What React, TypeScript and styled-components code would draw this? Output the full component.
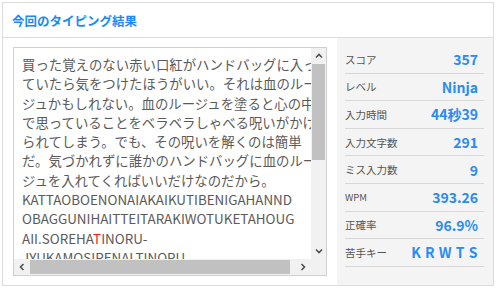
import React from 'react';
import styled, { createGlobalStyle } from 'styled-components';

const GlobalStyle = createGlobalStyle`
  html, body {
    margin: 0;
    padding: 0;
    background: #fff;
    overflow: hidden;
  }
  body {
    font-family: "Noto Sans CJK JP", "Noto Sans", sans-serif;
  }
`;

const Page = styled.div`
  padding: 2px 0 0 2px;
`;

const Card = styled.section`
  width: 490px;
  height: 282px;
  border: 1px solid #dcdcdc;
  background: #fff;
  display: flex;
  flex-direction: column;
  overflow: hidden;
`;

const Header = styled.h2`
  margin: 0;
  flex: 0 0 34px;
  display: flex;
  align-items: center;
  padding-left: 9px;
  border-bottom: 1px solid #dcdcdc;
  font-size: 12.5px;
  font-weight: 700;
  color: #1a8cf0;
`;

const Body = styled.div`
  flex: 1;
  min-height: 0;
  display: flex;
`;

const TextArea = styled.div`
  flex: 1;
  padding: 9px 10px;
`;

const TextBox = styled.div`
  height: 229px;
  box-sizing: border-box;
  border: 1px solid #cfcfcf;
  display: grid;
  grid-template-columns: 1fr 15px;
  grid-template-rows: 1fr 16px;
`;

const Viewport = styled.div`
  overflow: hidden;
  padding: 7px 0 0 8px;
  color: #5a5a5a;
  font-size: 13.4px;
  line-height: 19.3px;
`;

const TextInner = styled.div`
  width: 296px;
`;

const Line = styled.div`
  white-space: nowrap;
`;

const Rest = styled.div`
  word-break: break-all;
`;

const Typed = styled.span`
  color: #ff1a1a;
`;

const ScrollBar = styled.div<{ $vertical?: boolean }>`
  display: flex;
  flex-direction: ${({ $vertical }) => ($vertical ? 'column' : 'row')};
  background: #f1f1f1;
`;

const ArrowBtn = styled.div`
  flex: 0 0 16px;
  display: flex;
  align-items: center;
  justify-content: center;
  color: #505050;
`;

const Track = styled.div<{ $vertical?: boolean }>`
  flex: 1;
  display: flex;
  flex-direction: ${({ $vertical }) => ($vertical ? 'column' : 'row')};
`;

const Thumb = styled.div<{ $size: number; $vertical?: boolean }>`
  flex: 0 0 ${({ $size }) => $size}px;
  background: #c1c1c1;
  ${({ $vertical }) => ($vertical ? 'margin: 0 1px;' : 'margin: 1px 0;')}
`;

const Corner = styled.div`
  background: #f1f1f1;
`;

const Stats = styled.aside`
  width: 156px;
  box-sizing: border-box;
  background: #f4f4f4;
  padding: 8px 9px 0 8px;
`;

const StatRow = styled.div`
  display: flex;
  align-items: center;
  justify-content: space-between;
  height: 27.6px;
  box-sizing: border-box;
  border-bottom: 1px solid #d8d8d8;
  padding-right: 6px;
`;

const Label = styled.span<{ $latin?: boolean }>`
  font-size: ${({ $latin }) => ($latin ? '9.5px' : '10.5px')};
  color: #555;
`;

const Value = styled.span<{ $spaced?: boolean }>`
  font-size: 14px;
  font-weight: 700;
  color: #2a8cf0;
  letter-spacing: ${({ $spaced }) => ($spaced ? '0.5px' : '0')};
`;

const Chevron: React.FC<{ dir: 'up' | 'down' | 'left' | 'right' }> = ({ dir }) => {
  const rot = { up: 0, right: 90, down: 180, left: 270 }[dir];
  return (
    <svg width="8" height="8" viewBox="0 0 8 8" style={{ transform: `rotate(${rot}deg)` }}>
      <path d="M1 5.5 L4 2.5 L7 5.5" fill="none" stroke="currentColor" strokeWidth="1.6" />
    </svg>
  );
};

const jpLines = [
  '買った覚えのない赤い口紅がハンドバッグに入っ',
  'ていたら気をつけたほうがいい。それは血のルー',
  'ジュかもしれない。血のルージュを塗ると心の中',
  'で思っていることをベラベラしゃべる呪いがかけ',
  'られてしまう。でも、その呪いを解くのは簡単',
  'だ。気づかれずに誰かのハンドバッグに血のルー',
  'ジュを入れてくればいいだけなのだから。',
  'KATTAOBOENONAIAKAIKUTIBENIGAHANND',
  'OBAGGUNIHAITTEITARAKIWOTUKETAHOUG',
];

const restText =
  'JYUWONURUTOKOKORONONAKADEOMOTTEIRUKOTOWOBERABERASYABERUNOROIGAKAKERARETESIMAU.DEMO,SONONOROIWOTOKUNOHAKANNTANNDA.KIDUKAREZUNIDAREKANOHANNDOBAGGUNITINORU-JYUWOIRETEKUREBAIIDAKENANODAKARA.';

const stats: { label: string; value: string; latin?: boolean; spaced?: boolean }[] = [
  { label: 'スコア', value: '357' },
  { label: 'レベル', value: 'Ninja' },
  { label: '入力時間', value: '44秒39' },
  { label: '入力文字数', value: '291' },
  { label: 'ミス入力数', value: '9' },
  { label: 'WPM', value: '393.26', latin: true },
  { label: '正確率', value: '96.9%' },
  { label: '苦手キー', value: 'K R W T S', spaced: true },
];

const App: React.FC = () => {
  return (
    <Page>
      <GlobalStyle />
      <Card>
        <Header>今回のタイピング結果</Header>
        <Body>
          <TextArea>
            <TextBox>
              <Viewport>
                <TextInner>
                  {jpLines.map((l) => (
                    <Line key={l}>{l}</Line>
                  ))}
                  <Line>
                    AII.SOREHA<Typed>T</Typed>INORU-
                  </Line>
                  <Line>JYUKAMOSIRENAI.TINORU-</Line>
                  <Rest>{restText}</Rest>
                </TextInner>
              </Viewport>
              <ScrollBar $vertical>
                <ArrowBtn>
                  <Chevron dir="up" />
                </ArrowBtn>
                <Track $vertical>
                  <Thumb $vertical $size={96} />
                </Track>
                <ArrowBtn>
                  <Chevron dir="down" />
                </ArrowBtn>
              </ScrollBar>
              <ScrollBar>
                <ArrowBtn>
                  <Chevron dir="left" />
                </ArrowBtn>
                <Track>
                  <Thumb $size={260} />
                </Track>
                <ArrowBtn>
                  <Chevron dir="right" />
                </ArrowBtn>
              </ScrollBar>
              <Corner />
            </TextBox>
          </TextArea>
          <Stats>
            {stats.map((s) => (
              <StatRow key={s.label}>
                <Label $latin={s.latin}>{s.label}</Label>
                <Value $spaced={s.spaced}>{s.value}</Value>
              </StatRow>
            ))}
          </Stats>
        </Body>
      </Card>
    </Page>
  );
};

export default App;
